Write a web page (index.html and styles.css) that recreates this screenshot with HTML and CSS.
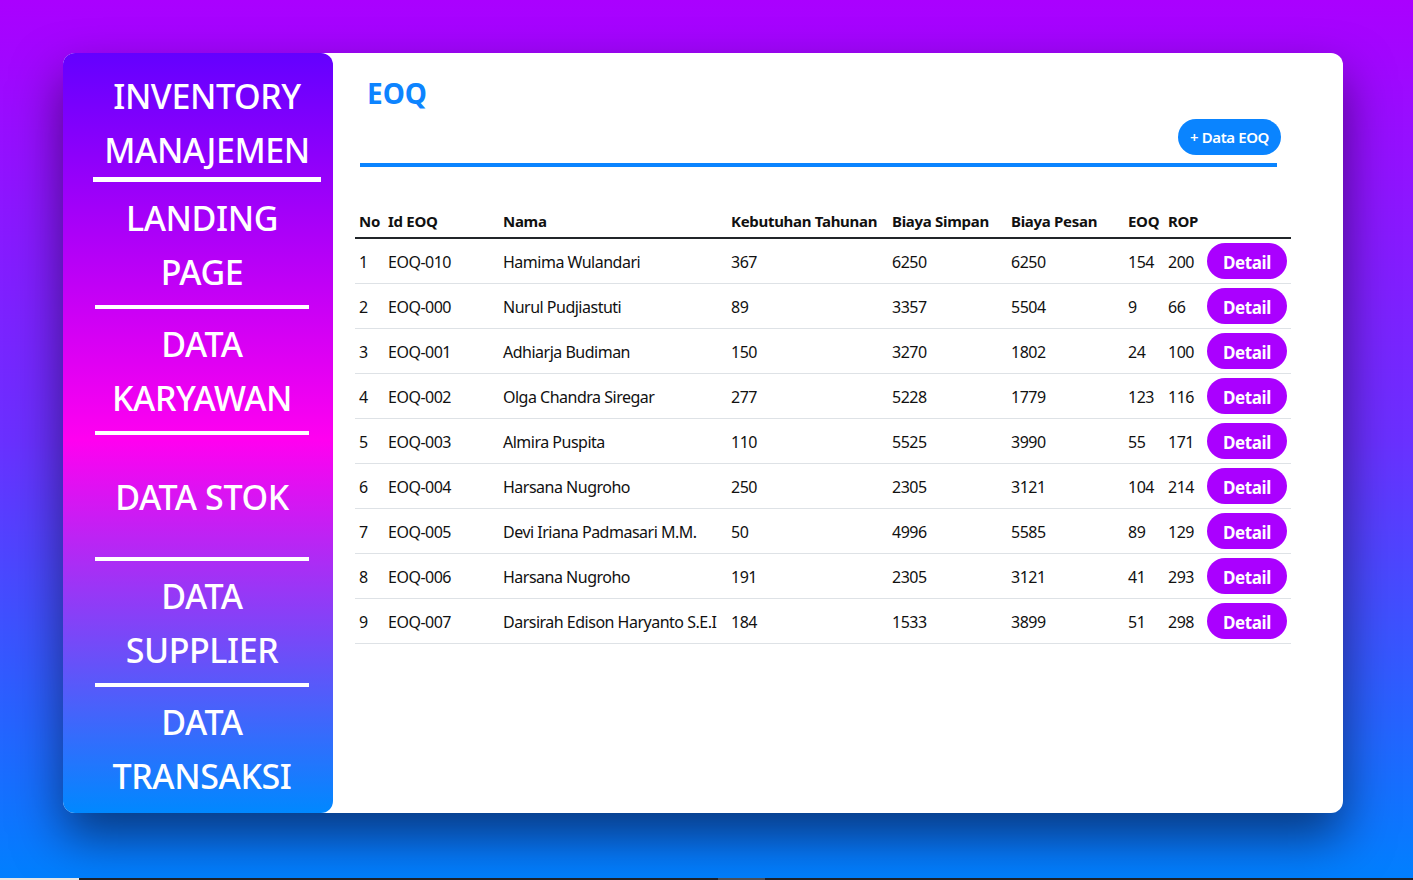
FILE: index.html
```html
<!DOCTYPE html>
<html lang="id">
<head>
<meta charset="utf-8">
<title>EOQ - Inventory Manajemen</title>
<link rel="stylesheet" href="styles.css">
</head>
<body>
<div class="page">
  <div class="card">
    <aside class="sidebar">
      <div class="brand">INVENTORY<br>MANAJEMEN</div>
      <nav class="nav">
        <div class="nav-item first"><a class="nav-link">LANDING<br>PAGE</a></div>
        <div class="nav-item"><a class="nav-link">DATA<br>KARYAWAN</a></div>
        <div class="nav-item"><a class="nav-link">DATA STOK</a></div>
        <div class="nav-item"><a class="nav-link">DATA<br>SUPPLIER</a></div>
        <div class="nav-item last"><a class="nav-link">DATA<br>TRANSAKSI</a></div>
      </nav>
    </aside>
    <main class="content">
      <h1 class="title">EOQ</h1>
      <div class="toolbar"><a class="btn-add">+ Data EOQ</a></div>
      <div class="rule"></div>
      <table class="eoq-table">
        <colgroup>
          <col class="c-no"><col class="c-id"><col class="c-nama"><col class="c-keb"><col class="c-simpan"><col class="c-pesan"><col class="c-eoq"><col class="c-rop"><col class="c-act">
        </colgroup>
        <thead>
          <tr><th>No</th><th>Id EOQ</th><th>Nama</th><th>Kebutuhan Tahunan</th><th>Biaya Simpan</th><th>Biaya Pesan</th><th>EOQ</th><th>ROP</th><th></th></tr>
        </thead>
        <tbody>
          <tr><td>1</td><td>EOQ-010</td><td>Hamima Wulandari</td><td>367</td><td>6250</td><td>6250</td><td>154</td><td>200</td><td><a class="btn-detail">Detail</a></td></tr>
          <tr><td>2</td><td>EOQ-000</td><td>Nurul Pudjiastuti</td><td>89</td><td>3357</td><td>5504</td><td>9</td><td>66</td><td><a class="btn-detail">Detail</a></td></tr>
          <tr><td>3</td><td>EOQ-001</td><td>Adhiarja Budiman</td><td>150</td><td>3270</td><td>1802</td><td>24</td><td>100</td><td><a class="btn-detail">Detail</a></td></tr>
          <tr><td>4</td><td>EOQ-002</td><td>Olga Chandra Siregar</td><td>277</td><td>5228</td><td>1779</td><td>123</td><td>116</td><td><a class="btn-detail">Detail</a></td></tr>
          <tr><td>5</td><td>EOQ-003</td><td>Almira Puspita</td><td>110</td><td>5525</td><td>3990</td><td>55</td><td>171</td><td><a class="btn-detail">Detail</a></td></tr>
          <tr><td>6</td><td>EOQ-004</td><td>Harsana Nugroho</td><td>250</td><td>2305</td><td>3121</td><td>104</td><td>214</td><td><a class="btn-detail">Detail</a></td></tr>
          <tr><td>7</td><td>EOQ-005</td><td>Devi Iriana Padmasari M.M.</td><td>50</td><td>4996</td><td>5585</td><td>89</td><td>129</td><td><a class="btn-detail">Detail</a></td></tr>
          <tr><td>8</td><td>EOQ-006</td><td>Harsana Nugroho</td><td>191</td><td>2305</td><td>3121</td><td>41</td><td>293</td><td><a class="btn-detail">Detail</a></td></tr>
          <tr><td>9</td><td>EOQ-007</td><td>Darsirah Edison Haryanto S.E.I</td><td>184</td><td>1533</td><td>3899</td><td>51</td><td>298</td><td><a class="btn-detail">Detail</a></td></tr>
        </tbody>
      </table>
    </main>
  </div>
</div>
<div class="statusbar"><span class="sb-a"></span><span class="sb-b"></span><span class="sb-c"></span><span class="sb-d"></span></div>
</body>
</html>
```
FILE: styles.css
```css
* { box-sizing: border-box; }
html, body { margin: 0; padding: 0; }
body {
  width: 1413px;
  height: 880px;
  overflow: hidden;
  font-family: "Noto Sans", "DejaVu Sans", sans-serif;
  background: linear-gradient(to bottom, #aa00ff 0%, #6a30ff 50%, #0080ff 100%);
}
.page {
  height: 878px;
  padding: 53px 70px 0 63px;
}
.card {
  display: flex;
  width: 1280px;
  height: 760px;
  background: #fff;
  border-radius: 12px;
  box-shadow: 0 24px 50px rgba(0, 0, 0, 0.5);
}
.sidebar {
  width: 270px;
  flex: none;
  border-radius: 12px;
  background: linear-gradient(to bottom, #6400ff 0%, #ff00f0 51%, #0088ff 100%);
  padding-top: 16px;
  color: #fff;
}
.brand {
  margin-left: 30px;
  width: 228px;
  text-align: center;
  font-size: 34px;
  font-weight: 500;
  line-height: 54px;
  letter-spacing: -0.4px;
  border-bottom: 5px solid #fff;
}
.nav {
  margin-left: 32px;
  width: 214px;
}
.nav-item {
  padding: 8px 0 6px;
  border-bottom: 4px solid #fff;
}
.nav-item.first { padding-top: 9px; }
.nav-item.last { border-bottom: none; }
.nav-link {
  height: 108px;
  display: flex;
  align-items: center;
  justify-content: center;
  text-align: center;
  font-size: 34px;
  font-weight: 500;
  line-height: 54px;
  letter-spacing: -0.4px;
  color: #fff;
  text-decoration: none;
}
.content {
  flex: 1;
  padding: 20px 52px 0 22px;
}
.title {
  margin: 0 0 0 12px;
  font-size: 28px;
  font-weight: 700;
  line-height: 40px;
  color: #0d84ff;
}
.toolbar {
  display: flex;
  justify-content: flex-end;
  margin-top: 6px;
  padding-right: 10px;
}
.btn-add {
  height: 36px;
  padding: 0 12px;
  border-radius: 18px;
  background: #0a84ff;
  color: #fff;
  font-size: 15px;
  font-weight: 600;
  letter-spacing: -0.4px;
  line-height: 36px;
}
.rule {
  margin: 8px 14px 0 5px;
  height: 4px;
  background: #0a84ff;
}
.eoq-table {
  margin-top: 40px;
  width: 100%;
  border-collapse: collapse;
  table-layout: fixed;
  color: #111;
}
.c-no { width: 29px; }
.c-id { width: 115px; }
.c-nama { width: 228px; }
.c-keb { width: 161px; }
.c-simpan { width: 119px; }
.c-pesan { width: 117px; }
.c-eoq { width: 40px; }
.c-rop { width: 39px; }
.c-act { width: 88px; }
.eoq-table th {
  padding: 3px 4px 5px;
  text-align: left;
  font-size: 15px;
  font-weight: 700;
  line-height: 22px;
  letter-spacing: -0.3px;
  white-space: nowrap;
  border-bottom: 2px solid #212529;
}
.eoq-table td {
  padding: 4px;
  height: 44px;
  font-size: 16px;
  line-height: 22px;
  letter-spacing: -0.5px;
  white-space: nowrap;
  vertical-align: middle;
  border-bottom: 1px solid #dee2e6;
}
.eoq-table td:not(:last-child) { padding-top: 5px; padding-bottom: 3px; }
.btn-detail {
  display: flex;
  align-items: center;
  justify-content: center;
  width: 80px;
  height: 36px;
  padding-top: 4px;
  border-radius: 18px;
  background: #aa00ff;
  color: #fff;
  font-size: 17px;
  font-weight: 700;
  letter-spacing: -0.4px;
}
.statusbar {
  display: flex;
  height: 2px;
}
.sb-a { width: 79px; background: #e6e6e6; }
.sb-b { width: 639px; background: #1d2129; }
.sb-c { width: 47px; background: #4a4f58; }
.sb-d { flex: 1; background: #1d2129; }
```
